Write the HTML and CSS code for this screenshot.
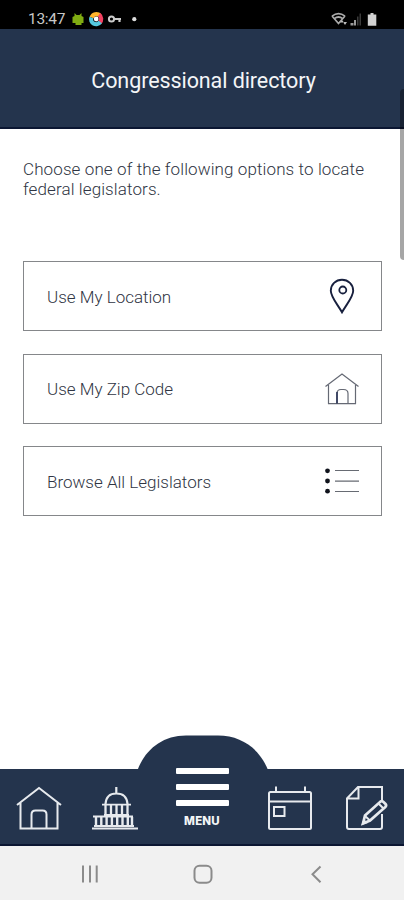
FILE: index.html
```html
<!DOCTYPE html>
<html lang="en">
<head>
<meta charset="utf-8">
<title>Congressional directory</title>
<link rel="stylesheet" href="styles.css">
</head>
<body>
<div class="status">
  <span class="clock">13:47</span>
  <svg class="status-left" width="68" height="16" viewBox="0 0 68 16">
    <path d="M3.5 2l2 2h3l2-2v3l2 1v6h-2v2h-6v-2h-3V6l2-1z" fill="#80ac12"/>
    <g fill="none" stroke-width="4.2">
      <path d="M20.6 6.5A5 5 0 0 1 29 4.7" stroke="#ffb52c"/>
      <path d="M28 3.8A5 5 0 0 1 28.6 11.6" stroke="#f24161"/>
      <path d="M29.2 11A5 5 0 0 1 20.4 6.4" stroke="#55c9df"/>
    </g>
    <circle cx="25.2" cy="8" r="2.4" fill="#fff"/>
    <circle cx="40.5" cy="8" r="2.6" fill="none" stroke="#ccc" stroke-width="2"/>
    <path d="M43 8h7M48.5 8v3" fill="none" stroke="#ccc" stroke-width="2.2"/>
    <circle cx="63.3" cy="8.2" r="2.1" fill="#ddd"/>
  </svg>
  <svg class="status-right" width="48" height="16" viewBox="0 0 48 16">
    <g fill="none" stroke="#aaa" stroke-width="1.7">
      <path d="M1 5.2Q7.5 .2 14 5.2M3.4 7.7Q7.5 4.3 11.6 7.7M1 5l6.5 7.5L14 5"/>
    </g>
    <path d="M9 11.5l2-2.500 2 2.500zM12 11l2 3 2-3z" fill="#bbb"/>
    <path d="M19.500 12h3v2.500h-3zM23 9h2v5.500h-2z" fill="#999"/>
    <path d="M26 5.500h1.500v9H26zM28.500 2.500H30v12h-1.500z" fill="#3b3b3b"/>
    <path d="M39.500 2h3v1.500h2.800v11.200h-8.500V3.500h2.700z" fill="#d2d2d2"/>
  </svg>
</div>
<header class="header"><h1>Congressional directory</h1></header>
<div class="scrollbar"></div>
<main class="content">
  <p class="intro">Choose one of the following options to locate<br>federal legislators.</p>
  <div class="options">
    <div class="option"><span>Use My Location</span>
      <svg width="36" height="36" viewBox="0 0 36 36" fill="none" stroke="#18203e">
        <path d="M18 34.300C14 27 6.800 19 6.800 12.700a11.200 11 0 0 1 22.400 0C29.200 19 22 27 18 34.300z" stroke-width="1.900"/>
        <circle cx="18.800" cy="12" r="3.500" stroke-width="1.800"/>
      </svg>
    </div>
    <div class="option"><span>Use My Zip Code</span>
      <svg width="36" height="36" viewBox="0 0 36 36" fill="none" stroke="#656974" stroke-width="1.200">
        <path d="M1.500 15.500L18 3l16.500 12.500M4.500 14v18.700h27V14"/>
        <path d="M13 32.500v-10q0-4 4-4h2.500q4.500 0 4.500 4v10"/>
        <path d="M13 32.500V21" stroke="#202b50" stroke-width="1.500"/>
      </svg>
    </div>
    <div class="option"><span>Browse All Legislators</span>
      <svg width="36" height="36" viewBox="0 0 36 36">
        <g fill="#10131c"><circle cx="3.500" cy="7.800" r="2.400"/><circle cx="3.500" cy="18" r="2.400"/><circle cx="3.500" cy="28.200" r="2.400"/></g>
        <path d="M11 7.500h24M11 18.200h24M11 28.500h24" stroke="#676b73" stroke-width="1.200"/>
      </svg>
    </div>
  </div>
</main>
<nav class="tabs">
  <svg class="hump" width="134" height="35" viewBox="0 0 134 35"><path d="M1.500 35C9 15 26 .500 50 .500h32c24 0 42 14 50 34.500z"/></svg>
  <svg class="tab home" width="46" height="46" viewBox="0 0 46 46">
    <path d="M1 19L23 2l22 17M4.500 17v25.500h37V17M15.500 42V28.500q0-4 4-4h7q4 0 4 4V42"/>
  </svg>
  <svg class="tab capitol" width="47" height="46" viewBox="0 0 47 46">
    <path d="M24.300 1v6M13.500 18C14 11 17.500 7.500 24.300 7.500S35 11 35.500 18" stroke-width="2.200"/>
    <path d="M10 18.700h29M12 29h25" stroke-width="1.800"/>
    <path d="M13.500 19v10M19 19v10M24.500 19v10M30 19v10M35.500 19v10" stroke-width="2.300"/>
    <path d="M1 30.500h40M2 40h40M0 42.500h46" stroke-width="2"/>
    <path d="M4 31v9M9.300 31v9M14.600 31v9M19.900 31v9M25.200 31v9M30.500 31v9M35.800 31v9M40 31v9" stroke-width="2.400"/>
  </svg>
  <div class="menu">
    <div class="bars"><i></i><i></i><i></i></div>
    <span>MENU</span>
  </div>
  <svg class="tab calendar" width="46" height="46" viewBox="0 0 46 46">
    <rect x="2" y="6" width="42" height="37" rx="1.500"/>
    <path d="M2 15.500h42M9 .500v6M38 .500v6"/><rect x="7" y="21" width="10.500" height="9"/>
  </svg>
  <svg class="tab edit" width="44" height="46" viewBox="0 0 44 46">
    <path d="M37 16V1H13L2 12.500v28.500q0 2 2 2h31q2 0 2-2V28M13.500 1v11.500H2"/>
    <path d="M18 37.500l2-8L35.500 15.500q1.500-.8 3 .5l2 2q1.300 1.500-.2 3L25 34.500z" stroke-width="2.700"/>
    <path d="M33.500 17.500l5 5M20 30l5 4.500M18 37.500l3-1-2-2z"/>
  </svg>
</nav>
<div class="system">
  <svg width="404" height="54" viewBox="0 0 404 54" fill="none" stroke="#8b8b8b" stroke-width="2">
    <path d="M83 19.500v17M90 19.500v17M96.700 19.500v17"/>
    <rect x="194.500" y="19.700" width="17" height="17" rx="5"/>
    <path d="M320.500 20.500l-8 7.800 8 8"/>
  </svg>
</div>
</body>
</html>
```
FILE: styles.css
```css
* { box-sizing: border-box; }
body {
  margin: 0;
  width: 404px;
  height: 900px;
  display: flex;
  flex-direction: column;
  position: relative;
  overflow: hidden;
  background: #fff;
  font-family: Roboto, "Liberation Sans", sans-serif;
}
svg { display: block; flex: none; }
.status {
  height: 29px;
  flex: none;
  display: flex;
  align-items: flex-start;
  padding: 11px 25px 0 28px;
  background: #000;
}
.clock { width: 43px; font-size: 15.5px; line-height: 17px; color: #c8c8c8; letter-spacing: -.3px; }
.status-right { margin-left: auto; }
.header {
  height: 100px;
  flex: none;
  display: flex;
  align-items: center;
  justify-content: center;
  padding: 5px 0 0 3px;
  background: #24344d;
  border-bottom: 2px solid #0b1632;
}
h1 { margin: 0; font-size: 21.500px; line-height: 26px; font-weight: 400; letter-spacing: -.08px; color: #f3f5f7; }
.scrollbar {
  position: absolute;
  left: 400px;
  top: 89px;
  width: 8px;
  height: 171px;
  border-radius: 4px;
  background: rgba(0, 0, 0, .35);
}
.content { flex: 1; padding: 30px 22px 0 23px; }
.intro { margin: 0; font-size: 17px; line-height: 20px; font-weight: 300; letter-spacing: .11px; color: #2f3543; white-space: nowrap; }
.options { display: grid; gap: 22.500px; margin-top: 62px; }
.option {
  height: 70px;
  display: flex;
  align-items: center;
  justify-content: space-between;
  padding: 0 21px 0 23px;
  border: 1px solid #85878a;
  font-size: 17px;
  font-weight: 300;
  color: #2f3543;
}
.option span { padding-top: 1px; }
.tabs {
  position: relative;
  height: 77px;
  flex: none;
  display: flex;
  align-items: flex-start;
  padding-left: 16px;
  background: #24344d;
  border-bottom: 2px solid #0b1632;
}
.hump { position: absolute; left: 136px; top: -34px; fill: #24344d; }
.tab { margin-top: 17px; fill: none; stroke: #e7eaee; stroke-width: 2; }
.capitol { margin-left: 30px; }
.menu {
  position: relative;
  width: 54px;
  margin: -1px 0 0 36px;
  display: flex;
  flex-direction: column;
  align-items: center;
}
.bars { width: 53px; display: grid; gap: 10px; }
.bars i { height: 6px; background: #fff; border-radius: 1px; }
.menu span { margin-top: 7px; font: 800 11.500px/16px Inter, sans-serif; letter-spacing: .2px; color: #f3f5f7; }
.calendar { margin-left: 38px; }
.edit { margin-left: 32px; }
.system { height: 54px; flex: none; background: #f1f1f1; }
```
